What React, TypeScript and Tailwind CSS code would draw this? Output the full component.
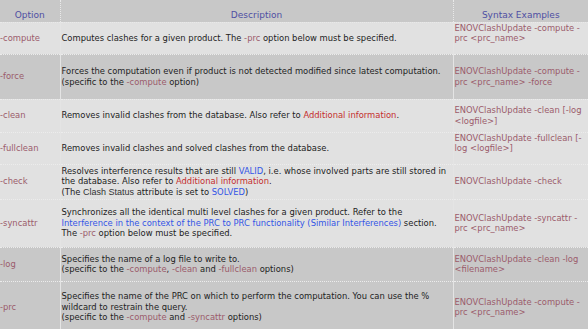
import type { ReactNode } from "react";

// Reference page: option table of ENOVClashUpdate
const opt = "text-[#9b5b6b]";

function Opt({ children }: { children: ReactNode }) {
  return <span className={opt}>{children}</span>;
}
function Red({ children }: { children: ReactNode }) {
  return <span className="text-[#c42d2d]">{children}</span>;
}
function Blue({ children }: { children: ReactNode }) {
  return <span className="text-[#3355e6]">{children}</span>;
}

type Row = {
  name: string;
  desc: ReactNode;
  syntax: ReactNode;
  dark?: boolean;
  h: string;
  lift?: boolean;
};

const rows: Row[] = [
  {
    name: "-compute",
    h: "h-[32px]",
    lift: true,
    desc: (
      <>
        Computes clashes for a given product. The <Opt>-prc</Opt> option below must be specified.
      </>
    ),
    syntax: "ENOVClashUpdate -compute -prc <prc_name>",
  },
  {
    name: "-force",
    h: "h-[45px]",
    dark: true,
    desc: (
      <>
        Forces the computation even if product is not detected modified since latest computation.
        <br />
        (specific to the <Opt>-compute</Opt> option)
      </>
    ),
    syntax: "ENOVClashUpdate -compute -prc <prc_name> -force",
  },
  {
    name: "-clean",
    h: "h-[33px]",
    desc: (
      <>
        Removes invalid clashes from the database. Also refer to <Red>Additional information</Red>.
      </>
    ),
    syntax: "ENOVClashUpdate -clean [-log <logfile>]",
  },
  {
    name: "-fullclean",
    h: "h-[30px]",
    lift: true,
    desc: <>Removes invalid clashes and solved clashes from the database.</>,
    syntax: "ENOVClashUpdate -fullclean [-log <logfile>]",
  },
  {
    name: "-check",
    h: "h-[35px]",
    desc: (
      <>
        Resolves interference results that are still <Blue>VALID</Blue>, i.e. whose involved parts are still stored in
        <br />
        the database. Also refer to <Red>Additional information</Red>.
        <br />
        (The <span className="font-['Liberation_Sans',sans-serif] text-[9px] text-[#333]">Clash Status</span> attribute is set to{" "}
        <Blue>SOLVED</Blue>)
      </>
    ),
    syntax: "ENOVClashUpdate -check",
  },
  {
    name: "-syncattr",
    h: "h-[48px]",
    desc: (
      <>
        Synchronizes all the identical multi level clashes for a given product. Refer to the
        <br />
        <Blue>Interference in the context of the PRC to PRC functionality (Similar Interferences)</Blue> section.
        <br />
        The <Opt>-prc</Opt> option below must be specified.
      </>
    ),
    syntax: "ENOVClashUpdate -syncattr -prc <prc_name>",
  },
  {
    name: "-log",
    h: "h-[34px]",
    dark: true,
    desc: (
      <>
        Specifies the name of a log file to write to.
        <br />
        (specific to the <Opt>-compute</Opt>, <Opt>-clean</Opt> and <Opt>-fullclean</Opt> options)
      </>
    ),
    syntax: "ENOVClashUpdate -clean -log <filename>",
  },
  {
    name: "-prc",
    h: "h-[52px]",
    dark: true,
    desc: (
      <>
        Specifies the name of the PRC on which to perform the computation. You can use the %
        <br />
        wildcard to restrain the query.
        <br />
        (specific to the <Opt>-compute</Opt> and <Opt>-syncattr</Opt> options)
      </>
    ),
    syntax: "ENOVClashUpdate -compute -prc <prc_name>",
  },
];

export default function App() {
  return (
    <div className="h-[329px] w-[588px] overflow-hidden bg-[#e1e1e1] font-['DejaVu_Sans',sans-serif] text-[8.4px] leading-[10.5px] text-[#222]">
      <table className="w-[592px] table-fixed border-collapse">
        <colgroup>
          <col className="w-[60px]" />
          <col className="w-[393px]" />
          <col className="w-[139px]" />
        </colgroup>
        <thead>
          <tr className="h-[22px] bg-[#c8c8c8] text-[9px] text-[#4f4fa3]">
            <th className="border-r border-b border-dotted border-[#e9e9e9] pt-[8px] text-center font-normal">Option</th>
            <th className="border-r border-b border-dotted border-[#e9e9e9] pt-[8px] text-center font-normal">Description</th>
            <th className="border-b border-dotted border-[#e9e9e9] pt-[8px] pr-[4px] text-center font-normal">Syntax Examples</th>
          </tr>
        </thead>
        <tbody>
          {rows.map((r) => (
            <tr key={r.name} className={`${r.h} ${r.dark ? "bg-[#c8c8c8]" : "bg-[#e1e1e1]"} border-b border-dotted border-[#ececec]`}>
              <td className={`border-r border-solid border-[#e4e4e4] pl-0 align-middle ${opt}`}>{r.name}</td>
              <td className="border-r border-solid border-[#e4e4e4] pl-[1px] align-middle">{r.desc}</td>
              <td className={`pl-[1px] pr-[4px] align-middle ${opt} ${r.lift ? "pb-[10px]" : ""}`}>{r.syntax}</td>
            </tr>
          ))}
        </tbody>
      </table>
    </div>
  );
}
